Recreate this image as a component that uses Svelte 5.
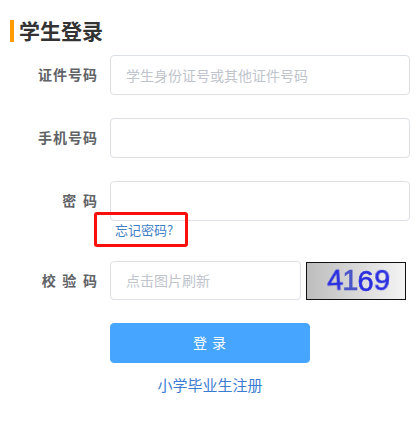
<script>
  const rows = [
    { label: '证件号码', placeholder: '学生身份证号或其他证件号码' },
    { label: '手机号码', placeholder: '' }
  ];
</script>

<main class="page">
  <h1 class="title">学生登录</h1>
  <form class="form" onsubmit={(e) => e.preventDefault()}>
    {#each rows as row}
      <div class="row">
        <span class="label">{row.label}</span>
        <input class="input" placeholder={row.placeholder} />
      </div>
    {/each}
    <div class="row">
      <span class="label spaced">密 码</span>
      <input class="input" type="password" />
    </div>
    <div class="forgot-row">
      <a class="forgot" href="#top">忘记密码?</a>
    </div>
    <div class="row code-row">
      <span class="label spaced">校 验 码</span>
      <input class="input code-input" placeholder="点击图片刷新" />
      <div class="captcha"><span class="d1">4</span><span class="d2">1</span><span class="d3">6</span><span class="d4">9</span></div>
    </div>
    <button class="submit" type="submit">登 录</button>
    <a class="register" href="#top">小学毕业生注册</a>
  </form>
</main>

<style>
  :global(body) {
    margin: 0;
    background: #fff;
  }
  .page {
    box-sizing: border-box;
    width: 417px;
    height: 437px;
    padding: 20px 7px 0 10px;
    font-family: "Noto Sans CJK SC", "Liberation Sans", sans-serif;
    overflow: hidden;
  }
  .title {
    margin: 0;
    height: 22px;
    border-left: 4px solid #ff9c00;
    padding-left: 5px;
    font-size: 21px;
    line-height: 20px;
    font-weight: 700;
    color: #333;
  }
  .form {
    display: flex;
    flex-direction: column;
    margin-top: 13px;
  }
  .row {
    display: flex;
    align-items: center;
    height: 40px;
    margin-bottom: 23px;
  }
  .label {
    box-sizing: border-box;
    width: 87px;
    margin-right: 13px;
    padding-bottom: 2px;
    text-align: right;
    font-size: 14px;
    font-weight: 700;
    letter-spacing: 1px;
    color: #606266;
    white-space: pre;
    transform: translateX(1px);
  }
  .spaced {
    word-spacing: 1.5px;
  }
  .input {
    box-sizing: border-box;
    width: 300px;
    height: 40px;
    padding: 0 15px;
    border: 1px solid #dcdfe6;
    border-radius: 4px;
    background: #fff;
    font: inherit;
    font-size: 14px;
    outline: none;
  }
  .input::placeholder {
    color: #c0c4cc;
    opacity: 1;
  }
  .forgot-row {
    position: relative;
    height: 17px;
    margin: -23px 0 23px 100px;
  }
  .forgot {
    position: absolute;
    left: -16px;
    top: -9px;
    box-sizing: border-box;
    width: 94px;
    height: 35px;
    padding-left: 18px;
    border: 3px solid #fb0f0c;
    border-radius: 3px;
    font-size: 13px;
    line-height: 30px;
    color: #3f7fc6;
    text-decoration: none;
  }
  .code-row {
    height: 39px;
  }
  .code-input {
    width: 191px;
    height: 39px;
    padding-bottom: 2px;
  }
  .captcha {
    box-sizing: border-box;
    display: flex;
    align-items: center;
    justify-content: center;
    width: 100px;
    height: 38px;
    margin-left: 5px;
    padding-left: 4px;
    border: 1px solid #111;
    background: linear-gradient(90deg, #bdbdbd, #f4f4f4);
    font-family: "Liberation Sans", sans-serif;
    font-size: 29px;
    letter-spacing: -1px;
    line-height: 1;
    color: #2a2ee0;
    -webkit-text-stroke: 0.6px #2a2ee0;
  }
  .captcha span {
    display: block;
    filter: blur(0.3px);
  }
  .d1 {
    transform: rotate(-4deg);
  }
  .d2 {
    color: #4a55c8;
    -webkit-text-stroke-color: #4a55c8;
  }
  .d3 {
    transform: translateY(1px);
  }
  .d4 {
    transform: rotate(4deg);
    margin-left: 1px;
  }
  .submit {
    width: 200px;
    height: 40px;
    margin-left: 100px;
    padding: 0 0 2px;
    border: 1px solid #46a6ff;
    border-radius: 4px;
    background: #46a6ff;
    color: #fff;
    font: inherit;
    font-size: 14px;
    letter-spacing: 1px;
  }
  .register {
    width: 200px;
    margin: 12px 0 0 100px;
    text-align: center;
    font-size: 15px;
    line-height: 20px;
    color: #3b7cd0;
    text-decoration: none;
  }
</style>
